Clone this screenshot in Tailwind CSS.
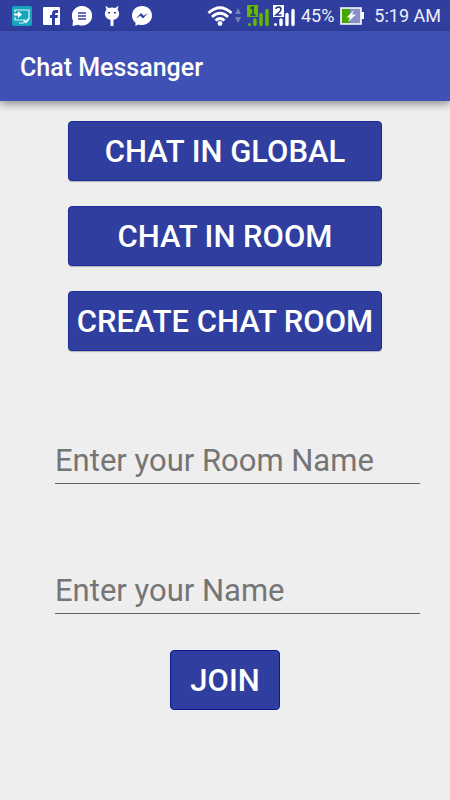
<!DOCTYPE html>
<html lang="en">
<head>
<meta charset="utf-8">
<meta name="viewport" content="width=device-width, initial-scale=1">
<title>Chat Messanger</title>
<script src="https://cdn.jsdelivr.net/npm/@tailwindcss/browser@4"></script>
</head>
<body class="flex min-h-screen flex-col bg-[#eeeeee] font-[Roboto,sans-serif]">
<div class="flex h-[31px] shrink-0 items-center justify-between bg-[#303f9f] pr-[9px] pl-3 text-lg text-[#eef0fa]">
  <div class="flex items-center gap-[11px]">
    <svg class="h-5 w-5" viewBox="0 0 20 20" aria-hidden="true"><rect width="20" height="20" rx="2" fill="#17a5bd"/><path d="M3 6V4h14v8M3 11v3h8M7 17h5" fill="none" stroke="#d9f5f8" stroke-width="1.2"/><path d="M2 7.500h4V5l4 3.500L6 12V9.500H2z" fill="#fff"/><path d="M11 14l1-1 2 1.500 2.500-3 1.500 1-2 3-2 2-2-1z" fill="#d9f5f8"/></svg>
    <svg class="h-[18px] w-[18px]" viewBox="0 0 18 18" aria-hidden="true"><rect width="17" height="18" rx="1" fill="#fff"/><path d="M9 18v-7H7V8h2V6.500C9 4 10.500 3 12.500 3H15v3h-1.500C12.500 6 12 6.300 12 7v1h3l-.500 3H12v7z" fill="#303f9f"/></svg>
    <svg class="h-5 w-5" viewBox="0 0 20 20" aria-hidden="true"><path d="M10 0a10 9.800 0 1 1-4 18.700L.5 20 1 14.500A10 9.800 0 0 1 10 0z" fill="#fff"/><path d="M6 7h8M6 10h8M6 13h8" stroke="#303f9f" stroke-width="1.300"/></svg>
    <svg class="h-5 w-[18px]" viewBox="0 0 18 20" aria-hidden="true"><path d="M3 0l2.500 2Q9 1 12.500 2L15 0l.5.500-1 3Q16.500 6 16 9 15 13 10.500 13.700V19a1.500 1.500 0 0 1-3 0v-5.300Q3 13 2 9 1.500 6 3.500 3.500l-1-3z" fill="#fff"/><path d="M5 6h2v1.500H5zM11 6h2v1.500h-2z" fill="#303f9f"/></svg>
    <svg class="h-5 w-5" viewBox="0 0 20 20" aria-hidden="true"><path d="M10 0C4.300 0 0 4 0 9.500c0 3 1.300 5.500 3.500 7V20l3-1.600q1.700.500 3.500.500c5.700 0 10-4 10-9.400S15.700 0 10 0z" fill="#fff"/><path d="M4 12.500L9 7l2.700 2.700L16 7l-5 5.500-2.700-2.700z" fill="#303f9f"/></svg>
  </div>
  <div class="flex items-center">
    <svg class="h-[22px] w-[26px]" viewBox="0 0 26 22" aria-hidden="true"><g fill="none" stroke="#fff" stroke-width="2.800"><path d="M1.500 8Q13-2.500 24.500 8"/><path d="M5 12Q13 4.500 21 12"/><path d="M8.500 15.500Q13 11.500 17.500 15.500"/></g><circle cx="13" cy="18.500" r="2.400" fill="#fff"/></svg>
    <svg class="ml-px h-[18px] w-2" viewBox="0 0 8 18" aria-hidden="true"><path d="M4 1l3 6H1zM1 10h6l-3 6z" fill="#7580bd"/></svg>
    <svg class="ml-[5px] h-[22px] w-[23px]" viewBox="0 0 23 22" aria-hidden="true"><rect width="11" height="12" fill="#62b900"/><path d="M3.500 3.500L6 2v8M3.500 10h5" fill="none" stroke="#203080" stroke-width="1.500"/><circle cx="2.500" cy="19.500" r="1.500" fill="#62b900"/><path d="M8 19.500V15M14 19.500V9.500M20 19.500V5.500" stroke="#62b900" stroke-width="3.400" stroke-linecap="round"/></svg>
    <svg class="ml-[3px] h-[22px] w-[23px]" viewBox="0 0 23 22" aria-hidden="true"><rect width="11" height="12" fill="#fff"/><path d="M3 4Q3 2 5.500 2T8 4.500Q8 6 3 10h5.500" fill="none" stroke="#203080" stroke-width="1.500"/><circle cx="2.500" cy="19.500" r="1.500" fill="#fff"/><path d="M8 19.500V15M14 19.500V9.500M20 19.500V5.500" stroke="#fff" stroke-width="3.400" stroke-linecap="round"/></svg>
    <span class="ml-[5px]">45%</span>
    <svg class="ml-[6px] h-[18px] w-6" viewBox="0 0 24 18" aria-hidden="true"><path d="M21 5h3v7h-3z" fill="#fff"/><path d="M1 1h20v16H1z" fill="#858fca"/><path d="M2 2h8v14H2z" fill="#43a800"/><path d="M1 1h20v16H1z" fill="none" stroke="#fff" stroke-width="1.600"/><path d="M14 3L6.500 10.500H10L8 15l8-7.500h-4z" fill="#fff"/></svg>
    <time class="ml-[10px]">5:19 AM</time>
  </div>
</div>
<header class="flex h-[70px] shrink-0 items-center bg-[#3f51b5] px-5 pt-1 shadow-[0_3px_8px_rgba(0,0,0,0.4)]">
  <h1 class="text-[25px] font-medium text-white">Chat Messanger</h1>
</header>
<main class="flex flex-col pt-5 text-[31px]">
  <nav class="mx-[68px] flex flex-col gap-[25px] font-medium text-white">
    <button type="button" class="h-[60px] rounded-[4px] border border-[#1a2b9b] bg-[#303f9f] pt-0.5 whitespace-nowrap shadow-[0_1px_1px_rgba(0,0,0,0.25)]">CHAT IN GLOBAL</button>
    <button type="button" class="h-[60px] rounded-[4px] border border-[#1a2b9b] bg-[#303f9f] pt-0.5 whitespace-nowrap shadow-[0_1px_1px_rgba(0,0,0,0.25)]">CHAT IN ROOM</button>
    <button type="button" class="h-[60px] rounded-[4px] border border-[#1a2b9b] bg-[#303f9f] pt-0.5 whitespace-nowrap shadow-[0_1px_1px_rgba(0,0,0,0.25)]">CREATE CHAT ROOM</button>
  </nav>
  <form class="mt-[85px] mr-[30px] ml-[55px] flex flex-col gap-[82px]">
    <input type="text" aria-label="Room name" placeholder="Enter your Room Name" class="h-12 w-full border-b border-[#606060] bg-transparent pt-px text-[#212121] outline-none placeholder:text-[#757575]">
    <input type="text" aria-label="Your name" placeholder="Enter your Name" class="h-12 w-full border-b border-[#606060] bg-transparent pt-px text-[#212121] outline-none placeholder:text-[#757575]">
    <button type="submit" class="-mt-[46px] mr-[25px] h-[60px] w-[110px] self-center rounded-[4px] border border-[#0a1b91] bg-[#303f9f] pt-0.5 font-medium text-white">JOIN</button>
  </form>
</main>
</body>
</html>
